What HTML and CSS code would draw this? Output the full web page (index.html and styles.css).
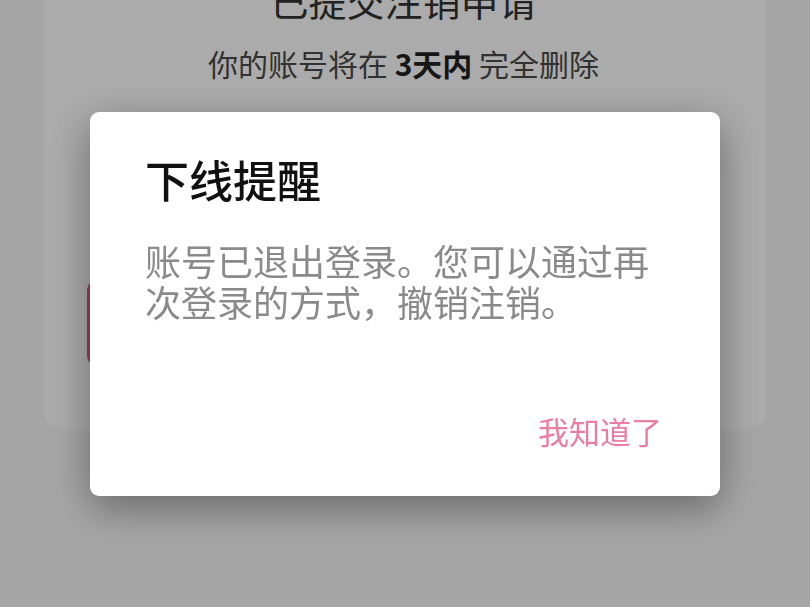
FILE: index.html
```html
<!DOCTYPE html>
<html lang="zh-CN">
<head>
<meta charset="utf-8">
<title>下线提醒</title>
<link rel="stylesheet" href="styles.css">
</head>
<body>
<main class="page">
  <section class="card">
    <h1 class="card-title">已提交注销申请</h1>
    <p class="card-sub">你的账号将在 <b>3天内</b> 完全删除</p>
    <div class="card-spacer"></div>
    <button class="primary-btn" aria-label="撤销注销"></button>
  </section>
</main>

<div class="overlay">
  <div class="dialog" role="dialog">
    <h2 class="dialog-title">下线提醒</h2>
    <p class="dialog-body">账号已退出登录。您可以通过再次登录的方式，撤销注销。</p>
    <div class="dialog-actions">
      <button class="dialog-btn">我知道了</button>
    </div>
  </div>
</div>
</body>
</html>
```

FILE: styles.css
```css
* { box-sizing: border-box; }

html, body {
  margin: 0;
  padding: 0;
  height: 100%;
}

body {
  background: #f7f7f7;
  font-family: "Noto Sans CJK SC", "Noto Sans", sans-serif;
  overflow: hidden;
}

.page {
  padding: 0 44px;
  margin-top: -60px;
}

.card {
  background: #ffffff;
  border-radius: 18px;
  padding: 40px 46px 62px 43px;
  display: flex;
  flex-direction: column;
  align-items: center;
}

.card-title {
  margin: 0;
  font-size: 38px;
  line-height: 40px;
  font-weight: 400;
  color: #333333;
}

.card-sub {
  margin: 23px 0 0;
  font-size: 30px;
  line-height: 40px;
  color: #4a4a4a;
}

.card-sub b {
  font-weight: 700;
  color: #222;
}

.card-spacer {
  height: 196px;
}

.primary-btn {
  width: 100%;
  height: 88px;
  border: none;
  border-radius: 12px;
  background: #ea5a86;
}

.overlay {
  position: fixed;
  inset: 0;
  background: rgba(0, 0, 0, 0.33);
  display: flex;
  align-items: center;
  justify-content: center;
}

.dialog {
  width: 630px;
  height: 384px;
  background: #ffffff;
  border-radius: 9px;
  padding: 37px 58px 45px 55px;
  box-shadow: 0 12px 40px rgba(0, 0, 0, 0.38);
  display: flex;
  flex-direction: column;
}

.dialog-title {
  margin: 0;
  font-size: 44px;
  line-height: 60px;
  font-weight: 500;
  color: #111111;
}

.dialog-body {
  margin: 31px 0 0;
  font-size: 36px;
  line-height: 41px;
  color: #8a8a8a;
}

.dialog-actions {
  margin-top: auto;
  display: flex;
  justify-content: flex-end;
}

.dialog-btn {
  border: none;
  background: none;
  padding: 0;
  font-family: inherit;
  font-size: 31px;
  line-height: 40px;
  color: #ea7ea2;
}
```
